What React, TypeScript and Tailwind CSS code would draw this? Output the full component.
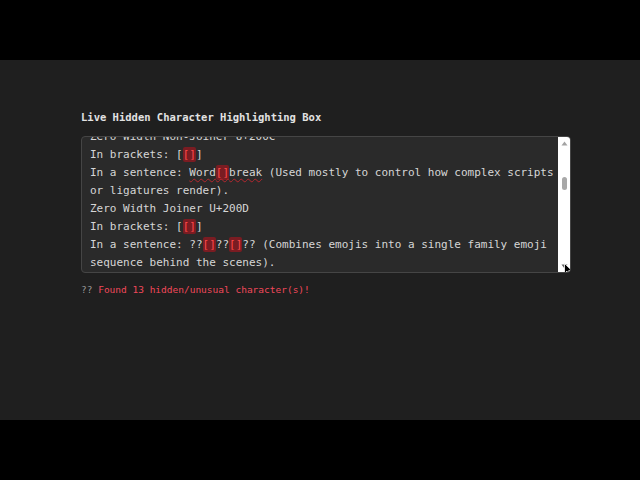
import React from "react";

const mono = { fontFamily: '"DejaVu Sans Mono", "Liberation Mono", monospace' };

function Hl({ children }: { children: React.ReactNode }) {
  return <span className="bg-[#7a1c22] text-[#ff4a4a] rounded-[2px] py-[1px]">{children}</span>;
}

export default function App() {
  return (
    <div className="w-[640px] h-[480px] flex flex-col bg-black" style={mono}>
      <div className="h-[60px] bg-black" />
      <div className="h-[360px] bg-[#1f1f1f] pl-[81px] pt-[49px] flex flex-col">
        <div className="text-[10.5px] leading-[16px] font-bold text-[#e2e2e2]">
          Live Hidden Character Highlighting Box
        </div>
        <div className="relative mt-[11px] w-[490px] h-[137px] border border-[#454545] rounded-[4px] bg-[#2a2a2a] flex overflow-hidden">
          <div className="flex-1 overflow-hidden pl-[8px] text-[11px] leading-[18px] text-[#d6d6d6] whitespace-pre">
            <div className="-mt-[9px]">
              <div>Zero Width Non-Joiner U+200C</div>
              <div>
                In brackets: [<Hl>[]</Hl>]
              </div>
              <div>
                In a sentence:{" "}
                <span className="underline decoration-wavy decoration-[#b3262d] decoration-1 underline-offset-2">
                  Word<Hl>[]</Hl>break
                </span>{" "}
                (Used mostly to control how complex scripts
              </div>
              <div>or ligatures render).</div>
              <div>Zero Width Joiner U+200D</div>
              <div>
                In brackets: [<Hl>[]</Hl>]
              </div>
              <div>
                In a sentence: ??<Hl>[]</Hl>??<Hl>[]</Hl>?? (Combines emojis into a single family emoji
              </div>
              <div>sequence behind the scenes).</div>
            </div>
          </div>
          <div className="w-[12px] bg-white flex flex-col items-center">
            <svg width="7" height="5" viewBox="0 0 7 5" className="mt-[4px]">
              <polygon points="3.5,0.5 6.5,4.5 0.5,4.5" fill="#a3a3a3" />
            </svg>
            <div className="mt-[31px] w-[5px] h-[13px] rounded-[3px] bg-[#a8a8a8]" />
            <div className="flex-1" />
            <svg width="7" height="5" viewBox="0 0 7 5" className="mb-[3px]">
              <polygon points="0.5,0.5 6.5,0.5 3.5,4.5" fill="#606060" />
            </svg>
          </div>
          <svg
            width="10"
            height="14"
            viewBox="0 0 10 14"
            className="absolute left-[482px] top-[126px]"
          >
            <path d="M0.5 0.5 L0.5 10.5 L3 8.2 L4.8 12.5 L6.4 11.8 L4.7 7.7 L8 7.7 Z" fill="#000" stroke="#fff" strokeWidth="0.8" />
          </svg>
        </div>
        <div className="mt-[10px] text-[9.5px] leading-[14px]">
          <span className="text-[#9a9a9a]">?? </span>
          <span className="text-[#f0485a]">Found 13 hidden/unusual character(s)!</span>
        </div>
      </div>
      <div className="h-[60px] bg-black" />
    </div>
  );
}
